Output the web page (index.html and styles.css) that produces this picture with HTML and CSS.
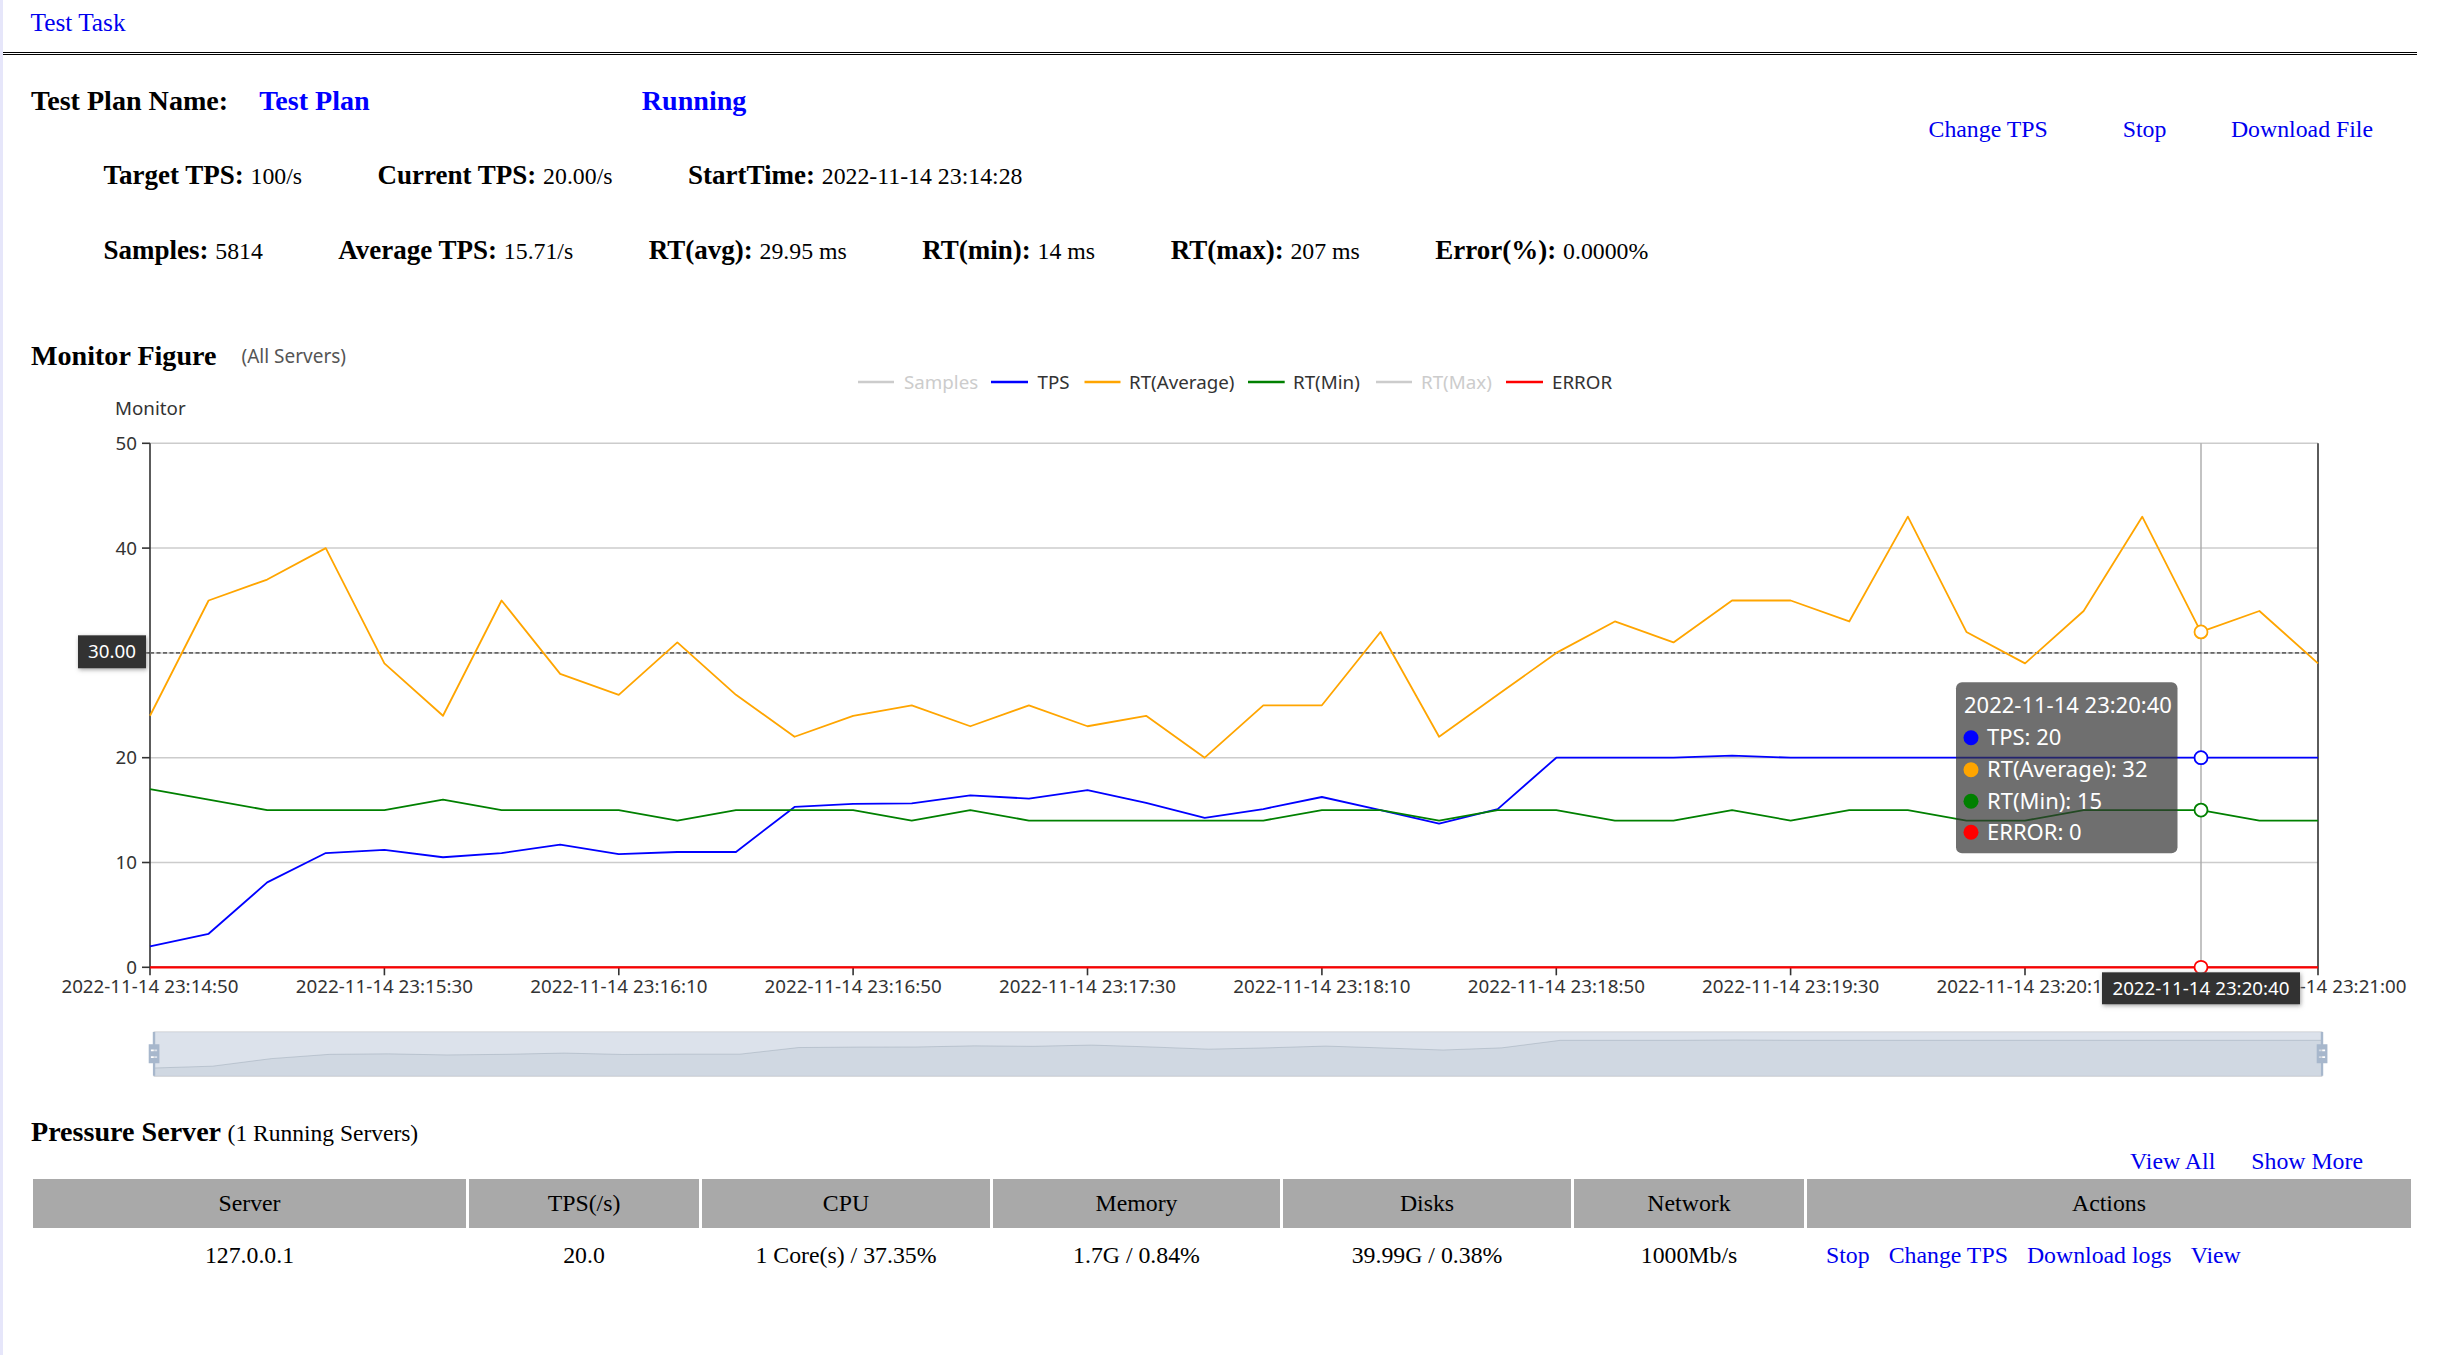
FILE: index.html
```html
<!DOCTYPE html>
<html>
<head>
<meta charset="utf-8">
<title>Test Task</title>
<link rel="stylesheet" href="styles.css">
</head>
<body>
<div class="page">
  <div class="topbar"><a href="#">Test Task</a></div>

  <div class="plan-head">
    <div class="plan-name"><span>Test Plan Name:</span><a class="plan-link" href="#">Test Plan</a><a class="plan-status" href="#">Running</a></div>
    <div class="plan-actions"><a href="#">Change TPS</a><a class="stop" href="#">Stop</a><a class="download" href="#">Download File</a></div>
  </div>

  <div class="stats-row first">
    <div><b>Target TPS:</b> <span class="v">100/s</span></div>
    <div><b>Current TPS:</b> <span class="v">20.00/s</span></div>
    <div><b>StartTime:</b> <span class="v">2022-11-14 23:14:28</span></div>
  </div>
  <div class="stats-row second">
    <div><b>Samples:</b> <span class="v">5814</span></div>
    <div><b>Average TPS:</b> <span class="v">15.71/s</span></div>
    <div><b>RT(avg):</b> <span class="v">29.95 ms</span></div>
    <div><b>RT(min):</b> <span class="v">14 ms</span></div>
    <div><b>RT(max):</b> <span class="v">207 ms</span></div>
    <div><b>Error(%):</b> <span class="v">0.0000%</span></div>
  </div>

  <div class="section-title monitor-title">Monitor Figure<span class="sub">(All Servers)</span></div>

  <svg class="chart" viewBox="3 365.7 2414 720" width="2414" height="720" xmlns="http://www.w3.org/2000/svg">
    <defs>
      <filter id="lblShadow" x="-20%" y="-40%" width="140%" height="180%">
        <feDropShadow dx="1" dy="1.5" stdDeviation="2" flood-color="#999" flood-opacity="0.9"/>
      </filter>
    </defs>

    <!-- legend -->
    <g class="legend">
      <line x1="858" y1="381.7" x2="894" y2="381.7" stroke="#ccc" stroke-width="2.4"/>
      <text class="lg off" x="904" y="388.4">Samples</text>
      <line x1="991" y1="381.7" x2="1028" y2="381.7" stroke="#0000ff" stroke-width="2.4"/>
      <text class="lg" x="1037.5" y="388.4">TPS</text>
      <line x1="1084.5" y1="381.7" x2="1120.5" y2="381.7" stroke="#ffa500" stroke-width="2.4"/>
      <text class="lg" x="1129" y="388.4">RT(Average)</text>
      <line x1="1248" y1="381.7" x2="1284.7" y2="381.7" stroke="#008000" stroke-width="2.4"/>
      <text class="lg" x="1293" y="388.4">RT(Min)</text>
      <line x1="1376" y1="381.7" x2="1412" y2="381.7" stroke="#ccc" stroke-width="2.4"/>
      <text class="lg off" x="1421" y="388.4">RT(Max)</text>
      <line x1="1506" y1="381.7" x2="1543" y2="381.7" stroke="#ff0000" stroke-width="2.4"/>
      <text class="lg" x="1552" y="388.4">ERROR</text>
    </g>

    <text class="ax" x="115" y="414.7">Monitor</text>

    <!-- split lines -->
    <g stroke="#ccc" stroke-width="1.5">
      <line x1="150" y1="443" x2="2318" y2="443"/>
      <line x1="150" y1="547.8" x2="2318" y2="547.8"/>
      <line x1="150" y1="652.6" x2="2318" y2="652.6"/>
      <line x1="150" y1="757.4" x2="2318" y2="757.4"/>
      <line x1="150" y1="862.2" x2="2318" y2="862.2"/>
    </g>

    <!-- y labels (the 30 label sits under the pointer label) -->
    <g class="ax" text-anchor="end">
      <text x="137" y="449.7">50</text>
      <text x="137" y="554.5">40</text>
      <text x="137" y="764.1">20</text>
      <text x="137" y="868.9">10</text>
      <text x="137" y="973.7">0</text>
    </g>

    <!-- axes -->
    <g stroke="#333" stroke-width="1.6">
      <line x1="150" y1="443" x2="150" y2="967"/>
      <line x1="2318" y1="443" x2="2318" y2="975"/>
      <line x1="150" y1="967" x2="2318" y2="967"/>
      <line x1="142" y1="443" x2="150" y2="443"/>
      <line x1="142" y1="547.8" x2="150" y2="547.8"/>
      <line x1="142" y1="652.6" x2="150" y2="652.6"/>
      <line x1="142" y1="757.4" x2="150" y2="757.4"/>
      <line x1="142" y1="862.2" x2="150" y2="862.2"/>
      <line x1="142" y1="967" x2="150" y2="967"/>
      <line x1="150" y1="967" x2="150" y2="975"/>
      <line x1="384.4" y1="967" x2="384.4" y2="975"/>
      <line x1="618.8" y1="967" x2="618.8" y2="975"/>
      <line x1="853.1" y1="967" x2="853.1" y2="975"/>
      <line x1="1087.5" y1="967" x2="1087.5" y2="975"/>
      <line x1="1321.9" y1="967" x2="1321.9" y2="975"/>
      <line x1="1556.3" y1="967" x2="1556.3" y2="975"/>
      <line x1="1790.6" y1="967" x2="1790.6" y2="975"/>
      <line x1="2025" y1="967" x2="2025" y2="975"/>
    </g>

    <!-- x labels -->
    <g class="ax" text-anchor="middle">
      <text x="150" y="993">2022-11-14 23:14:50</text>
      <text x="384.4" y="993">2022-11-14 23:15:30</text>
      <text x="618.8" y="993">2022-11-14 23:16:10</text>
      <text x="853.1" y="993">2022-11-14 23:16:50</text>
      <text x="1087.5" y="993">2022-11-14 23:17:30</text>
      <text x="1321.9" y="993">2022-11-14 23:18:10</text>
      <text x="1556.3" y="993">2022-11-14 23:18:50</text>
      <text x="1790.6" y="993">2022-11-14 23:19:30</text>
      <text x="2025" y="993">2022-11-14 23:20:10</text>
      <text x="2318" y="993">2022-11-14 23:21:00</text>
    </g>

    <!-- axis pointers -->
    <line x1="2201" y1="443" x2="2201" y2="967" stroke="#aaa" stroke-width="1.4"/>
    <line x1="150" y1="652.6" x2="2318" y2="652.6" stroke="#666" stroke-width="1.6" stroke-dasharray="4 2.5"/>

    <!-- series -->
    <g fill="none" stroke-width="1.8" stroke-linejoin="round" transform="translate(150 967) scale(58.5946 -10.48)">
      <polyline vector-effect="non-scaling-stroke" stroke="#0000ff" points="0,2 1,3.2 2,8.1 3,10.9 4,11.2 5,10.5 6,10.9 7,11.7 8,10.8 9,11 10,11 11,15.3 12,15.6 13,15.65 14,16.4 15,16.1 16,16.9 17,15.7 18,14.25 19,15.1 20,16.25 21,15 22,13.7 23,15.1 24,20 25,20 26,20 27,20.2 28,20 29,20 30,20 31,20 32,20 33,20 34,20 35,20 36,20 37,20"/>
      <polyline vector-effect="non-scaling-stroke" stroke="#ffa500" points="0,24 1,35 2,37 3,40 4,29 5,24 6,35 7,28 8,26 9,31 10,26 11,22 12,24 13,25 14,23 15,25 16,23 17,24 18,20 19,25 20,25 21,32 22,22 23,26 24,30 25,33 26,31 27,35 28,35 29,33 30,43 31,32 32,29 33,34 34,43 35,32 36,34 37,29"/>
      <polyline vector-effect="non-scaling-stroke" stroke="#008000" points="0,17 1,16 2,15 3,15 4,15 5,16 6,15 7,15 8,15 9,14 10,15 11,15 12,15 13,14 14,15 15,14 16,14 17,14 18,14 19,14 20,15 21,15 22,14 23,15 24,15 25,14 26,14 27,15 28,14 29,15 30,15 31,14 32,14 33,15 34,15 35,15 36,14 37,14"/>
    </g>
    <line x1="150" y1="967" x2="2318" y2="967" stroke="#ff0000" stroke-width="2.2"/>

    <!-- emphasis symbols -->
    <g fill="#fff" stroke-width="1.8">
      <circle cx="2201" cy="757.4" r="6.5" stroke="#0000ff"/>
      <circle cx="2201" cy="631.6" r="6.5" stroke="#ffa500"/>
      <circle cx="2201" cy="809.8" r="6.5" stroke="#008000"/>
      <circle cx="2201" cy="967" r="6.5" stroke="#ff0000"/>
    </g>

    <!-- data zoom slider -->
    <rect x="154" y="1031.5" width="2168" height="44.5" fill="none" stroke="#ddd" stroke-width="1"/>
    <g transform="translate(154 1070.8) scale(58.5946 -1.539)">
      <polygon fill="rgba(47,69,84,0.09)" points="0,2 1,3.2 2,8.1 3,10.9 4,11.2 5,10.5 6,10.9 7,11.7 8,10.8 9,11 10,11 11,15.3 12,15.6 13,15.65 14,16.4 15,16.1 16,16.9 17,15.7 18,14.25 19,15.1 20,16.25 21,15 22,13.7 23,15.1 24,20 25,20 26,20 27,20.2 28,20 29,20 30,20 31,20 32,20 33,20 34,20 35,20 36,20 37,20 37,-3.38 0,-3.38"/>
      <polyline fill="none" vector-effect="non-scaling-stroke" stroke="rgba(47,69,84,0.3)" stroke-width="0.8" points="0,2 1,3.2 2,8.1 3,10.9 4,11.2 5,10.5 6,10.9 7,11.7 8,10.8 9,11 10,11 11,15.3 12,15.6 13,15.65 14,16.4 15,16.1 16,16.9 17,15.7 18,14.25 19,15.1 20,16.25 21,15 22,13.7 23,15.1 24,20 25,20 26,20 27,20.2 28,20 29,20 30,20 31,20 32,20 33,20 34,20 35,20 36,20 37,20"/>
    </g>
    <rect x="154" y="1031.5" width="2168" height="44.5" fill="rgba(167,183,204,0.4)"/>
    <g fill="#a7b7cc" fill-rule="evenodd">
      <path transform="translate(144.76 1026.7) scale(1.275)" d="M8.2,13.6V3.9H6.3v9.7H3.1v14.9h3.3v9.7h1.8v-9.7h3.3V13.6H8.2z M9.7,24.4H4.8v-1.4h4.9V24.4z M9.7,19.1H4.8v-1.4h4.9V19.1z"/>
      <path transform="translate(2312.76 1026.7) scale(1.275)" d="M8.2,13.6V3.9H6.3v9.7H3.1v14.9h3.3v9.7h1.8v-9.7h3.3V13.6H8.2z M9.7,24.4H4.8v-1.4h4.9V24.4z M9.7,19.1H4.8v-1.4h4.9V19.1z"/>
    </g>

    <!-- axis pointer labels -->
    <g filter="url(#lblShadow)">
      <rect x="78" y="635" width="68" height="33" fill="#333"/>
      <rect x="2102" y="972" width="198" height="32" fill="#333"/>
    </g>
    <text class="ptr" x="112" y="658.2" text-anchor="middle">30.00</text>
    <text class="ptr" x="2201" y="994.7" text-anchor="middle">2022-11-14 23:20:40</text>

    <!-- tooltip -->
    <g class="tooltip">
      <rect x="1956" y="682" width="221.5" height="171" rx="6" ry="6" fill="rgba(50,50,50,0.7)"/>
      <text class="tt" x="1964" y="713">2022-11-14 23:20:40</text>
      <circle cx="1971" cy="737.5" r="7.5" fill="#0000ff"/>
      <text class="tt" x="1987" y="745">TPS: 20</text>
      <circle cx="1971" cy="769.5" r="7.5" fill="#ffa500"/>
      <text class="tt" x="1987" y="777">RT(Average): 32</text>
      <circle cx="1971" cy="801" r="7.5" fill="#008000"/>
      <text class="tt" x="1987" y="808.5">RT(Min): 15</text>
      <circle cx="1971" cy="832" r="7.5" fill="#ff0000"/>
      <text class="tt" x="1987" y="839.5">ERROR: 0</text>
    </g>
  </svg>

  <div class="section-title pressure-title">Pressure Server <span class="count">(1 Running Servers)</span></div>
  <div class="table-links"><a href="#">View All</a><a href="#">Show More</a></div>

  <table class="servers">
    <colgroup>
      <col class="c-server"><col class="c-tps"><col class="c-cpu"><col class="c-mem"><col class="c-disk"><col class="c-net"><col class="c-act">
    </colgroup>
    <thead>
      <tr><td>Server</td><td>TPS(/s)</td><td>CPU</td><td>Memory</td><td>Disks</td><td>Network</td><td>Actions</td></tr>
    </thead>
    <tbody>
      <tr>
        <td>127.0.0.1</td>
        <td>20.0</td>
        <td>1 Core(s) / 37.35%</td>
        <td>1.7G / 0.84%</td>
        <td>39.99G / 0.38%</td>
        <td>1000Mb/s</td>
        <td class="actions"><a href="#">Stop</a><a href="#">Change TPS</a><a href="#">Download logs</a><a href="#">View</a></td>
      </tr>
    </tbody>
  </table>
</div>
</body>
</html>
```

FILE: styles.css
```css
html, body {
  margin: 0;
  padding: 0;
  background: #fff;
}

body {
  font-family: "Liberation Serif", "Times New Roman", serif;
  color: #000;
}

a {
  color: #0000ee;
  text-decoration: none;
}

.page {
  width: 2414px;
  min-height: 1355px;
  border-left: 3px solid #e6e6fa;
}

.topbar {
  height: 29px;
  line-height: 29px;
  padding: 8px 0 15px 27.5px;
  border-bottom: 3px double #000;
  font-size: 25.3px;
}

.plan-head {
  display: flex;
  justify-content: space-between;
  align-items: flex-start;
  height: 58px;
  margin-top: 29.7px;
  padding: 0 44px 0 28px;
}

.plan-name {
  font-size: 28.1px;
  line-height: 32px;
  font-weight: bold;
  white-space: nowrap;
}

.plan-link {
  margin-left: 31px;
  color: #0000ff;
}

.plan-status {
  margin-left: 272px;
  color: #0000ff;
}

.plan-actions {
  display: flex;
  margin-top: 31px;
  font-size: 23.8px;
  line-height: 27px;
  white-space: nowrap;
}

.plan-actions .stop {
  margin-left: 75px;
}

.plan-actions .download {
  margin-left: 64.5px;
}

.stats-row {
  display: flex;
  align-items: baseline;
  gap: 75.5px;
  line-height: 30px;
  padding-left: 100.5px;
  font-size: 27px;
  white-space: nowrap;
}

.stats-row.first {
  margin-top: 17px;
}

.stats-row.second {
  margin-top: 45px;
}

.stats-row .v {
  font-size: 23.8px;
  line-height: 1;
}

.section-title {
  height: 32px;
  line-height: 32px;
  padding-left: 28px;
  font-size: 28.1px;
  font-weight: bold;
  white-space: nowrap;
}

.monitor-title {
  height: 26px;
  margin-top: 75px;
}

.monitor-title .sub {
  margin-left: 25px;
  vertical-align: 2px;
  font-family: "Noto Sans", "DejaVu Sans", sans-serif;
  font-weight: normal;
  font-size: 19px;
  line-height: 1;
  color: #555;
}

.chart {
  display: block;
  width: 2414px;
  height: 720px;
}

.chart .ax {
  font-family: "Noto Sans", "DejaVu Sans", sans-serif;
  font-size: 18.75px;
  fill: #333;
}

.chart .lg {
  font-family: "Noto Sans", "DejaVu Sans", sans-serif;
  font-size: 18.75px;
  fill: #333;
}

.chart .lg.off {
  fill: #ccc;
}

.chart .ptr {
  font-family: "Noto Sans", "DejaVu Sans", sans-serif;
  font-size: 18.75px;
  fill: #fff;
}

.chart .tt {
  font-family: "Noto Sans", "DejaVu Sans", sans-serif;
  font-size: 22px;
  fill: #fff;
}

.pressure-title {
  margin-top: 30.8px;
}

.pressure-title .count {
  font-weight: normal;
  font-size: 23.5px;
}

.table-links {
  display: flex;
  justify-content: flex-end;
  gap: 36px;
  height: 27px;
  line-height: 27px;
  padding-right: 54px;
  font-size: 23.8px;
}

.servers {
  width: 2384px;
  margin: 1px 0 0 27px;
  border-spacing: 3px;
  table-layout: fixed;
  font-size: 23.8px;
}

.c-server { width: 433px; }
.c-tps { width: 230px; }
.c-cpu { width: 288px; }
.c-mem { width: 287px; }
.c-disk { width: 288px; }
.c-net { width: 230px; }
.c-act { width: 604px; }

.servers td {
  height: 49px;
  padding: 0;
  text-align: center;
  vertical-align: middle;
  white-space: nowrap;
}

.servers thead td {
  background: #a9a9a9;
}

.servers td.actions {
  text-align: left;
}

.servers td.actions a {
  margin-left: 19px;
}
```
